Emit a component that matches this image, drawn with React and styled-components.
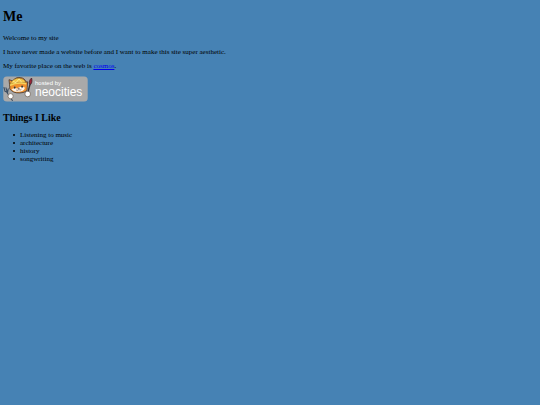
import React from 'react'
import styled, { createGlobalStyle } from 'styled-components'

const GlobalStyle = createGlobalStyle`
    body {
        margin: 0;
        background: #4682B4;
        color: #000;
        font-family: 'Liberation Serif', 'Times New Roman', serif;
        font-size: 7px;
        line-height: 8px;
    }
`
const Page = styled.main`
    padding: 9px 3px;
`
const Title = styled.h1`
    font-size: 14px;
    line-height: 16px;
    margin: 0 0 9px;
`
const Paragraph = styled.p`
    margin: 0 0 6px;
`
const Link = styled.a`
    color: #0000EE;
    text-decoration: underline;
`
const BadgeLink = styled.a`
    display: block;
    width: fit-content;
    margin-bottom: 10px;
`
const Badge = styled.svg`
    display: block;
    width: 85px;
    height: 26px;
`
const Subtitle = styled.h2`
    font-size: 10px;
    line-height: 12px;
    margin: 0 0 7px;
`
const List = styled.ul`
    list-style: none;
    margin: 0;
    padding-left: 10px;
`
const Item = styled.li`
    display: flex;
    align-items: center;
    gap: 5px;

    &::before {
        content: '';
        width: 2px;
        height: 2px;
        border-radius: 50%;
        background: #000;
    }
`

const likes = ['Listening to music', 'architecture', 'history', 'songwriting']

function NeocitiesBadge() {
    return (
        <Badge viewBox="0 0 85 26" role="img" aria-label="Hosted by Neocities">
            <rect x="0.3" y="0.6" width="84.4" height="25" rx="3.5" fill="#A9A9A9" />
            {/* fork */}
            <path d="M1 11.5l1 3.8 2.6 1 .6-3.4M3 11.8l1.2 4.2M3.6 16l5.8 8.5" fill="none" stroke="#3D4F63" strokeWidth="1.1" strokeLinecap="round" />
            {/* brush */}
            <path d="M27.2 7.5l-2.6 10" fill="none" stroke="#3B3431" strokeWidth="1.4" />
            <path d="M26.4 7.7c-.6-2 .3-4.2 2.2-5.7.8 2.5.4 4.7-.8 6.3z" fill="#9C2435" stroke="#35212A" strokeWidth="0.7" />
            {/* cat */}
            <path d="M6.8 11L6 3.7l3.8 1.3C11.5 2.4 14.2 1 17.4 1.5c3 .5 5 2.2 5.6 4.5l1.6-.2-.4 5.9c.4 2.5-1.3 4.1-4.2 4.8-4.2 1-9.1.5-11.4-1.8C6.9 13.5 6.4 12.7 6.8 11z" fill="#EE912F" stroke="#403532" strokeWidth="0.8" />
            <path d="M8.6 13c1.8-.9 4-1 5.6-.5 1.4-1.5 4.4-1.7 7.6-1 .1 2-1.5 3.5-4.3 4-3.8.7-7.7.3-8.9-2.5z" fill="#FFF4E5" />
            <path d="M7 8.7C8.2 4.5 12 1.9 16.6 2.2c3.6.3 5.7 2.2 6.1 4.7-5-.9-10.2-.9-15.7 1.8z" fill="#F4C84D" stroke="#815B25" strokeWidth="0.6" />
            <path d="M7 9.3c5-2.3 10.4-2.7 16.1-1.6" fill="none" stroke="#F5D35C" strokeWidth="1.5" />
            <path d="M10 5.5l3 1.2 3-3.8 2.8 3.5" fill="none" stroke="#FFF0A0" strokeWidth="0.8" />
            <ellipse cx="11.7" cy="11.6" rx="0.9" ry="1.1" fill="#29343B" />
            <ellipse cx="19.1" cy="10.7" rx="0.9" ry="1.1" fill="#29343B" />
            <path d="M14.7 12.2l1.7-.2-.7 1zM13.2 14c1 .5 2 .3 2.7-.6.8.7 1.7.7 2.5-.1" fill="none" stroke="#573A30" strokeWidth="0.6" />
            <circle cx="7.6" cy="20.2" r="2.6" fill="#FFF" stroke="#59483B" strokeWidth="0.6" />
            <circle cx="24.7" cy="18" r="2.8" fill="#FFF" stroke="#59483B" strokeWidth="0.6" />
            <text x="32" y="9" fontFamily="'Liberation Sans', sans-serif" fontSize="6" fill="#FFF">hosted by</text>
            <text x="32" y="20" fontFamily="'Liberation Sans', sans-serif" fontSize="12" fill="#FFF">neocities</text>
        </Badge>
    )
}

export function App() {
    return (
        <>
            <GlobalStyle />
            <Page>
                <Title>Me</Title>
                <Paragraph>Welcome to my site</Paragraph>
                <Paragraph>I have never made a website before and I want to make this site super aesthetic.</Paragraph>
                <Paragraph>
                    My favorite place on the web is <Link href="#cosmos">cosmos</Link>.
                </Paragraph>
                <BadgeLink href="#neocities">
                    <NeocitiesBadge />
                </BadgeLink>
                <Subtitle>Things I Like</Subtitle>
                <List>
                    {likes.map((like) => (
                        <Item key={like}>{like}</Item>
                    ))}
                </List>
            </Page>
        </>
    )
}

export default App
